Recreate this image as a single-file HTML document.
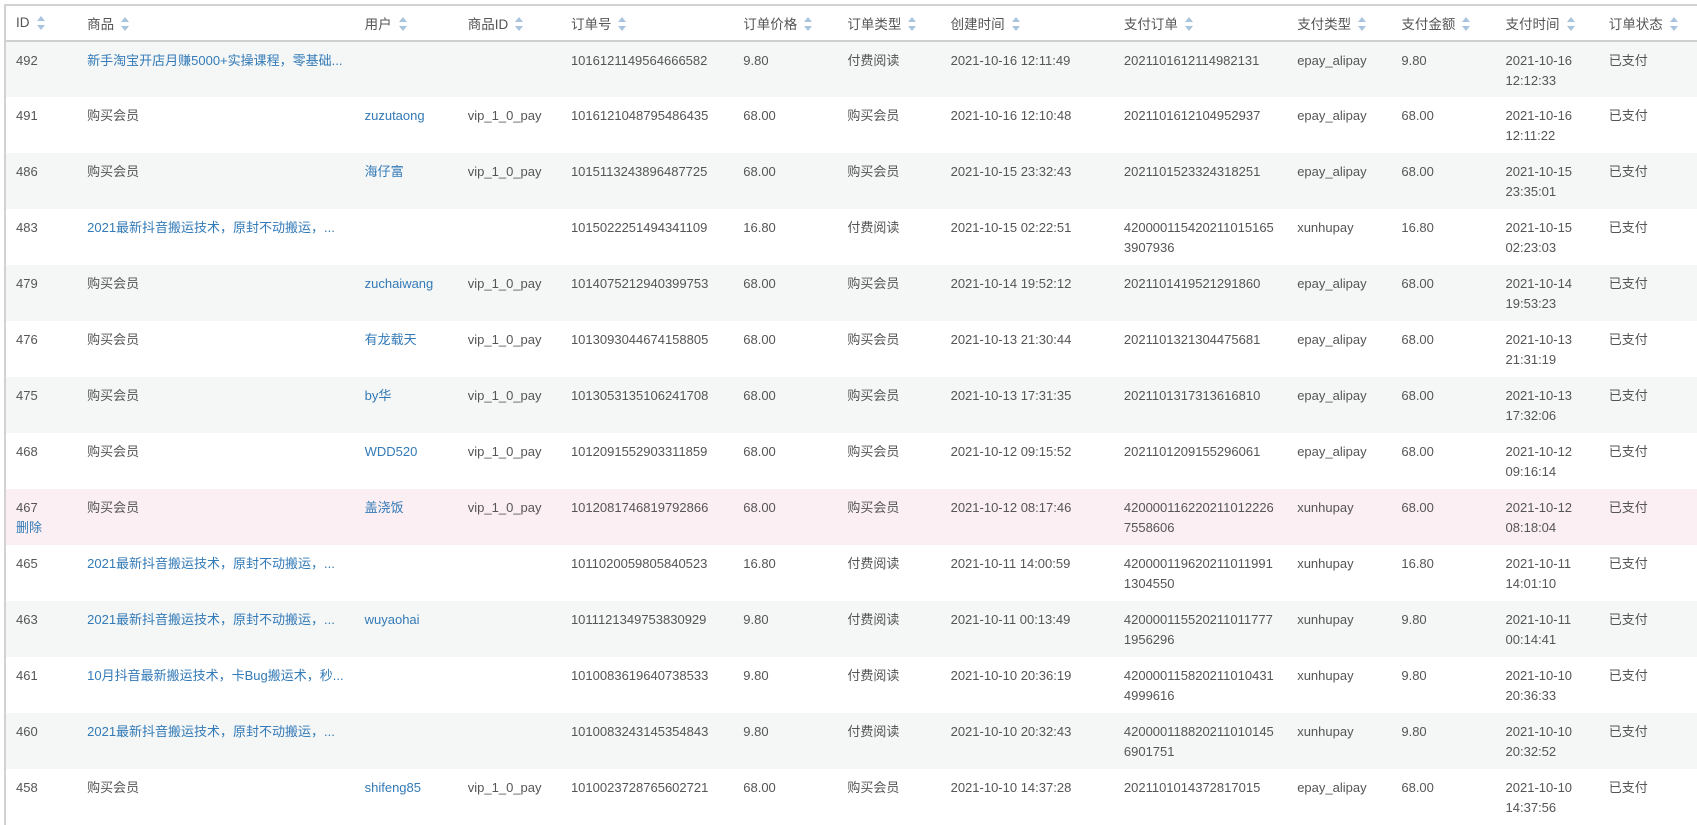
<!DOCTYPE html>
<html><head><meta charset="utf-8"><style>
body{margin:0;background:#fff;width:1697px;height:824px;overflow:hidden;font-family:"Liberation Sans","Noto Sans CJK SC",sans-serif;font-size:13px;color:#555;}
.wrap{position:absolute;left:4px;top:4px;right:0;border-left:2px solid #d2d2d2;border-top:2px solid #d2d2d2;}
table{border-collapse:collapse;table-layout:fixed;width:1693px;}
th{font-weight:normal;text-align:left;height:34px;padding:0 0 0 10px;border-bottom:2px solid #cfcfcf;color:#555;font-size:13.5px;white-space:nowrap;}
td{vertical-align:top;padding:9px 0 0 10px;height:47px;line-height:20px;box-sizing:border-box;}
tr.r td{height:56px}
tr.s td{background:#f5f7f7}
tr.h td{background:#fbeff3}
a{color:#337ab7;text-decoration:none}
.si{display:inline-block;vertical-align:middle;margin-left:7px;width:8px;height:14px;position:relative;top:-1px}
.si:before,.si:after{content:"";position:absolute;left:0;border-left:4px solid transparent;border-right:4px solid transparent}
.si:before{top:0;border-bottom:5px solid #a9c4de}
.si:after{bottom:0;border-top:5px solid #a9c4de}
</style></head><body><div class="wrap"><table>
<colgroup><col style="width:71px"><col style="width:277px"><col style="width:103px"><col style="width:103px"><col style="width:172px"><col style="width:104px"><col style="width:103px"><col style="width:173px"><col style="width:173px"><col style="width:104px"><col style="width:104px"><col style="width:103px"><col style="width:100px"></colgroup>
<tr><th>ID<i class="si"></i></th><th>商品<i class="si"></i></th><th>用户<i class="si"></i></th><th>商品ID<i class="si"></i></th><th>订单号<i class="si"></i></th><th>订单价格<i class="si"></i></th><th>订单类型<i class="si"></i></th><th>创建时间<i class="si"></i></th><th>支付订单<i class="si"></i></th><th>支付类型<i class="si"></i></th><th>支付金额<i class="si"></i></th><th>支付时间<i class="si"></i></th><th>订单状态<i class="si"></i></th></tr>
<tr class="r s"><td>492</td><td><a>新手淘宝开店月赚5000+实操课程，零基础...</a></td><td></td><td></td><td>1016121149564666582</td><td>9.80</td><td>付费阅读</td><td>2021-10-16 12:11:49</td><td>2021101612114982131</td><td>epay_alipay</td><td>9.80</td><td>2021-10-16<br>12:12:33</td><td>已支付</td></tr>
<tr class="r"><td>491</td><td>购买会员</td><td><a>zuzutaong</a></td><td>vip_1_0_pay</td><td>1016121048795486435</td><td>68.00</td><td>购买会员</td><td>2021-10-16 12:10:48</td><td>2021101612104952937</td><td>epay_alipay</td><td>68.00</td><td>2021-10-16<br>12:11:22</td><td>已支付</td></tr>
<tr class="r s"><td>486</td><td>购买会员</td><td><a>海仔富</a></td><td>vip_1_0_pay</td><td>1015113243896487725</td><td>68.00</td><td>购买会员</td><td>2021-10-15 23:32:43</td><td>2021101523324318251</td><td>epay_alipay</td><td>68.00</td><td>2021-10-15<br>23:35:01</td><td>已支付</td></tr>
<tr class="r"><td>483</td><td><a>2021最新抖音搬运技术，原封不动搬运，...</a></td><td></td><td></td><td>1015022251494341109</td><td>16.80</td><td>付费阅读</td><td>2021-10-15 02:22:51</td><td>420000115420211015165<br>3907936</td><td>xunhupay</td><td>16.80</td><td>2021-10-15<br>02:23:03</td><td>已支付</td></tr>
<tr class="r s"><td>479</td><td>购买会员</td><td><a>zuchaiwang</a></td><td>vip_1_0_pay</td><td>1014075212940399753</td><td>68.00</td><td>购买会员</td><td>2021-10-14 19:52:12</td><td>2021101419521291860</td><td>epay_alipay</td><td>68.00</td><td>2021-10-14<br>19:53:23</td><td>已支付</td></tr>
<tr class="r"><td>476</td><td>购买会员</td><td><a>有龙载天</a></td><td>vip_1_0_pay</td><td>1013093044674158805</td><td>68.00</td><td>购买会员</td><td>2021-10-13 21:30:44</td><td>2021101321304475681</td><td>epay_alipay</td><td>68.00</td><td>2021-10-13<br>21:31:19</td><td>已支付</td></tr>
<tr class="r s"><td>475</td><td>购买会员</td><td><a>by华</a></td><td>vip_1_0_pay</td><td>1013053135106241708</td><td>68.00</td><td>购买会员</td><td>2021-10-13 17:31:35</td><td>2021101317313616810</td><td>epay_alipay</td><td>68.00</td><td>2021-10-13<br>17:32:06</td><td>已支付</td></tr>
<tr class="r"><td>468</td><td>购买会员</td><td><a>WDD520</a></td><td>vip_1_0_pay</td><td>1012091552903311859</td><td>68.00</td><td>购买会员</td><td>2021-10-12 09:15:52</td><td>2021101209155296061</td><td>epay_alipay</td><td>68.00</td><td>2021-10-12<br>09:16:14</td><td>已支付</td></tr>
<tr class="r h"><td>467<br><a>删除</a></td><td>购买会员</td><td><a>盖浇饭</a></td><td>vip_1_0_pay</td><td>1012081746819792866</td><td>68.00</td><td>购买会员</td><td>2021-10-12 08:17:46</td><td>420000116220211012226<br>7558606</td><td>xunhupay</td><td>68.00</td><td>2021-10-12<br>08:18:04</td><td>已支付</td></tr>
<tr class="r"><td>465</td><td><a>2021最新抖音搬运技术，原封不动搬运，...</a></td><td></td><td></td><td>1011020059805840523</td><td>16.80</td><td>付费阅读</td><td>2021-10-11 14:00:59</td><td>420000119620211011991<br>1304550</td><td>xunhupay</td><td>16.80</td><td>2021-10-11<br>14:01:10</td><td>已支付</td></tr>
<tr class="r s"><td>463</td><td><a>2021最新抖音搬运技术，原封不动搬运，...</a></td><td><a>wuyaohai</a></td><td></td><td>1011121349753830929</td><td>9.80</td><td>付费阅读</td><td>2021-10-11 00:13:49</td><td>420000115520211011777<br>1956296</td><td>xunhupay</td><td>9.80</td><td>2021-10-11<br>00:14:41</td><td>已支付</td></tr>
<tr class="r"><td>461</td><td><a>10月抖音最新搬运技术，卡Bug搬运术，秒...</a></td><td></td><td></td><td>1010083619640738533</td><td>9.80</td><td>付费阅读</td><td>2021-10-10 20:36:19</td><td>420000115820211010431<br>4999616</td><td>xunhupay</td><td>9.80</td><td>2021-10-10<br>20:36:33</td><td>已支付</td></tr>
<tr class="r s"><td>460</td><td><a>2021最新抖音搬运技术，原封不动搬运，...</a></td><td></td><td></td><td>1010083243145354843</td><td>9.80</td><td>付费阅读</td><td>2021-10-10 20:32:43</td><td>420000118820211010145<br>6901751</td><td>xunhupay</td><td>9.80</td><td>2021-10-10<br>20:32:52</td><td>已支付</td></tr>
<tr class="r"><td>458</td><td>购买会员</td><td><a>shifeng85</a></td><td>vip_1_0_pay</td><td>1010023728765602721</td><td>68.00</td><td>购买会员</td><td>2021-10-10 14:37:28</td><td>2021101014372817015</td><td>epay_alipay</td><td>68.00</td><td>2021-10-10<br>14:37:56</td><td>已支付</td></tr>
</table></div></body></html>
